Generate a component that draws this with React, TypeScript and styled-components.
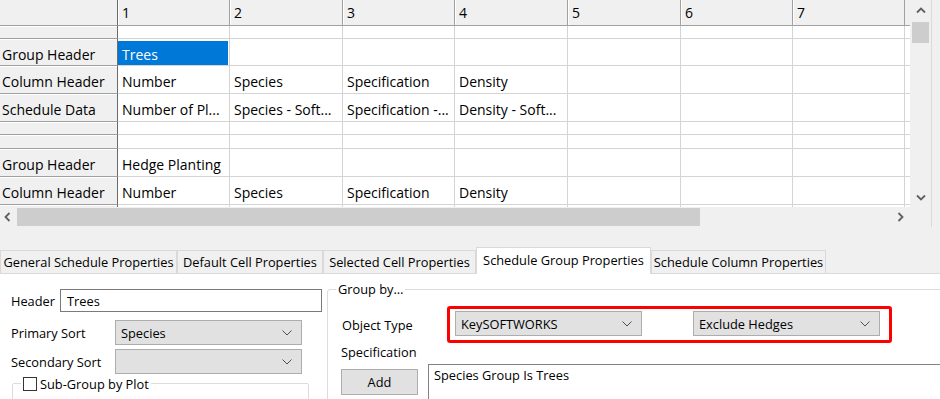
import React from 'react';
import styled, { createGlobalStyle } from 'styled-components';

const GlobalStyle = createGlobalStyle`
  html, body { margin: 0; padding: 0; background: #f0f0f0; }
  body { font-family: "Open Sans", "Noto Sans", sans-serif; color: #000; }
  * { box-sizing: border-box; }
`;

const COLS = [112, 113, 112, 113, 113, 112, 112];
const TEMPLATE = `118px ${COLS.map((w) => `${w}px`).join(' ')} 1fr`;

type RowData = { h: number; label?: string; cells?: string[]; selected?: number };

const ROWS: RowData[] = [
  { h: 13 },
  { h: 27, label: 'Group Header', cells: ['Trees'], selected: 0 },
  { h: 28, label: 'Column Header', cells: ['Number', 'Species', 'Specification', 'Density'] },
  { h: 28, label: 'Schedule Data', cells: ['Number of Pl...', 'Species - Soft...', 'Specification -...', 'Density - Soft...'] },
  { h: 13 },
  { h: 14 },
  { h: 28, label: 'Group Header', cells: ['Hedge Planting'] },
  { h: 28, label: 'Column Header', cells: ['Number', 'Species', 'Specification', 'Density'] },
  { h: 28 },
];

const TABS = [
  { label: 'General Schedule Properties', width: 177 },
  { label: 'Default Cell Properties', width: 146 },
  { label: 'Selected Cell Properties', width: 153 },
  { label: 'Schedule Group Properties', width: 175, active: true },
  { label: 'Schedule Column Properties', width: 175 },
];

const Window = styled.div`
  width: 940px;
  height: 399px;
  overflow: hidden;
  background: #f0f0f0;
  display: flex;
  flex-direction: column;
`;

const GridFrame = styled.div`
  width: 932px;
  height: 227px;
  flex: none;
  display: grid;
  grid-template-columns: 910px 21px;
  grid-template-rows: 207px 20px;
  border-right: 1px solid #dadada;
`;

const Sheet = styled.div`
  grid-column: 1;
  grid-row: 1;
  overflow: hidden;
  background: #fff;
  display: flex;
  flex-direction: column;
`;

const GridRow = styled.div<{ $h: number }>`
  display: grid;
  grid-template-columns: ${TEMPLATE};
  height: ${(p) => p.$h}px;
  flex: none;
`;

const CellBase = styled.div`
  display: flex;
  align-items: center;
  white-space: nowrap;
  overflow: hidden;
  font-size: 14px;
  line-height: 1;
`;

const Corner = styled(CellBase)`
  background: #f0f0f0;
  border-right: 1px solid #6b6b6b;
  border-bottom: 1px solid #a0a0a0;
`;

const ColHead = styled(CellBase)`
  background: #f0f0f0;
  border-right: 1px solid #a0a0a0;
  border-bottom: 1px solid #a0a0a0;
  box-shadow: inset 1px 0 0 #fff;
  padding-left: 4px;
`;

const HeadFiller = styled(CellBase)`
  background: #f0f0f0;
  border-bottom: 1px solid #a0a0a0;
`;

const RowHead = styled(CellBase)`
  background: #f0f0f0;
  border-right: 1px solid #6b6b6b;
  border-bottom: 1px solid #a0a0a0;
  box-shadow: inset 0 1px 0 #fff;
  padding: 5px 0 0 2px;
`;

const Cell = styled(CellBase)<{ $selected?: boolean }>`
  background: ${(p) => (p.$selected ? '#0078d7' : '#fff')};
  color: ${(p) => (p.$selected ? '#fff' : '#000')};
  box-shadow: ${(p) => (p.$selected ? 'inset 0 2px 0 #fff, inset -1px 0 0 #fff' : 'none')};
  border-right: 1px solid #d4d4d4;
  border-bottom: 1px solid #d4d4d4;
  padding: 5px 0 0 4px;
`;

const FillerCell = styled(CellBase)`
  background: #fff;
  border-bottom: 1px solid #d4d4d4;
`;

const VScroll = styled.div`
  grid-column: 2;
  grid-row: 1;
  background: #f0f0f0;
  display: flex;
  flex-direction: column;
  align-items: center;
`;

const HScroll = styled.div`
  grid-column: 1;
  grid-row: 2;
  background: #f0f0f0;
  display: flex;
  align-items: center;
`;

const ScrollCorner = styled.div`
  grid-column: 2;
  grid-row: 2;
  background: #f0f0f0;
`;

const ArrowBox = styled.div<{ $w: number; $h: number }>`
  width: ${(p) => p.$w}px;
  height: ${(p) => p.$h}px;
  flex: none;
  display: flex;
  align-items: center;
  justify-content: center;
`;

const VThumb = styled.div`
  width: 17px;
  height: 21px;
  margin-top: 2px;
  background: #cdcdcd;
  flex: none;
`;

const HThumb = styled.div<{ $w: number }>`
  width: ${(p) => p.$w}px;
  height: 18px;
  margin-left: 3px;
  background: #cdcdcd;
  flex: none;
`;

const Spacer = styled.div`
  flex: 1;
`;

const TabBar = styled.div`
  margin-top: 20px;
  height: 27px;
  flex: none;
  display: flex;
  align-items: flex-end;
  border-bottom: 1px solid #d9d9d9;
`;

const Tab = styled.div<{ $w: number; $active?: boolean }>`
  width: ${(p) => p.$w}px;
  height: ${(p) => (p.$active ? 27 : 23)}px;
  margin-bottom: ${(p) => (p.$active ? -1 : 0)}px;
  background: ${(p) => (p.$active ? '#fff' : '#f0f0f0')};
  border: 1px solid #d9d9d9;
  border-bottom: none;
  display: flex;
  align-items: center;
  justify-content: center;
  padding-bottom: ${(p) => (p.$active ? 3 : 1)}px;
  font-size: 12.8px;
  white-space: nowrap;
  flex: none;
`;

const Panel = styled.div`
  flex: 1;
  background: #fff;
  display: flex;
  align-items: flex-start;
  font-size: 12.8px;
  overflow: hidden;
`;

const LeftColumn = styled.div`
  width: 322px;
  flex: none;
  padding: 15px 0 0 11px;
  display: flex;
  flex-direction: column;
`;

const HeaderRow = styled.div`
  display: flex;
  align-items: center;
  gap: 5px;
`;

const Label = styled.span`
  white-space: nowrap;
`;

const TextBox = styled.div<{ $w: number }>`
  width: ${(p) => p.$w}px;
  height: 23px;
  border: 1px solid #7a7a7a;
  background: #fff;
  padding-left: 6px;
  display: flex;
  align-items: center;
`;

const SortGrid = styled.div`
  margin-top: 8px;
  display: grid;
  grid-template-columns: 104px 187px;
  row-gap: 4px;
  align-items: center;
`;

const Combo = styled.div<{ $w?: number }>`
  width: ${(p) => (p.$w ? `${p.$w}px` : 'auto')};
  height: 25px;
  background: #e1e1e1;
  border: 1px solid #adadad;
  display: flex;
  align-items: center;
  justify-content: space-between;
  padding: 0 9px 0 5px;
  white-space: nowrap;
`;

const SubGroup = styled.fieldset`
  margin: 1px 0 0 1px;
  width: 297px;
  height: 40px;
  border: 1px solid #dcdcdc;
  border-radius: 2px;
  padding: 0 8px;
`;

const Legend = styled.legend`
  padding: 0 2px 0 2px;
  display: flex;
  align-items: center;
  gap: 3px;
  height: 17px;
`;

const CheckBox = styled.span`
  width: 14px;
  height: 14px;
  border: 1px solid #333;
  background: #fff;
  display: inline-block;
`;

const GroupBox = styled.fieldset`
  margin: 7px 0 0 5px;
  width: 640px;
  height: 140px;
  flex: none;
  border: 1px solid #dcdcdc;
  border-radius: 3px;
  padding: 8px 0 0 14px;
`;

const GroupLegend = styled.legend`
  padding: 0 2px;
  margin-left: -6px;
  height: 17px;
  line-height: 17px;
`;

const ObjectRow = styled.div`
  display: flex;
  align-items: center;
`;

const ObjectLabel = styled(Label)`
  width: 105px;
  flex: none;
`;

const Highlight = styled.div`
  display: flex;
  gap: 51px;
  border: 3px solid #ff0000;
  border-radius: 3px;
  padding: 2px 9px 4px 5px;
`;

const SpecRow = styled.div`
  display: flex;
  align-items: flex-start;
  margin-top: 1px;
`;

const SpecColumn = styled.div`
  display: flex;
  flex-direction: column;
  gap: 8px;
  margin-left: -1px;
`;

const SpecLabel = styled(Label)`
  height: 17px;
  line-height: 17px;
`;

const Button = styled.div`
  width: 77px;
  height: 26px;
  background: #e1e1e1;
  border: 1px solid #adadad;
  display: flex;
  align-items: center;
  justify-content: center;
`;

const TextArea = styled.div`
  margin: 20px 0 0 10px;
  width: 560px;
  height: 50px;
  border: 1px solid #828282;
  background: #fff;
  padding: 1px 5px;
`;

const ComboChevron = () => (
  <svg width="10" height="6" viewBox="0 0 10 6">
    <path d="M0.5 0.5 L5 5 L9.5 0.5" stroke="#505050" strokeWidth="1" fill="none" />
  </svg>
);

const ScrollArrow = ({ dir }: { dir: 'up' | 'down' | 'left' | 'right' }) => {
  const paths: Record<string, string> = {
    up: 'M1 5.5 L5 1.5 L9 5.5',
    down: 'M1 1.5 L5 5.5 L9 1.5',
    left: 'M5.5 1 L1.5 5 L5.5 9',
    right: 'M1.5 1 L5.5 5 L1.5 9',
  };
  const vertical = dir === 'up' || dir === 'down';
  return (
    <svg width={vertical ? 10 : 7} height={vertical ? 7 : 10} viewBox={vertical ? '0 0 10 7' : '0 0 7 10'}>
      <path d={paths[dir]} stroke="#606060" strokeWidth="1.8" fill="none" />
    </svg>
  );
};

export default function App() {
  return (
    <>
      <GlobalStyle />
      <Window>
        <GridFrame>
          <Sheet>
            <GridRow $h={26}>
              <Corner />
              {COLS.map((_, i) => (
                <ColHead key={i}>{i + 1}</ColHead>
              ))}
              <HeadFiller />
            </GridRow>
            {ROWS.map((row, r) => (
              <GridRow key={r} $h={row.h}>
                <RowHead>{row.label ?? ''}</RowHead>
                {COLS.map((_, c) => (
                  <Cell key={c} $selected={row.selected === c}>
                    {row.cells?.[c] ?? ''}
                  </Cell>
                ))}
                <FillerCell />
              </GridRow>
            ))}
          </Sheet>
          <VScroll>
            <ArrowBox $w={21} $h={20}>
              <ScrollArrow dir="up" />
            </ArrowBox>
            <VThumb />
            <Spacer />
            <ArrowBox $w={21} $h={20}>
              <ScrollArrow dir="down" />
            </ArrowBox>
          </VScroll>
          <HScroll>
            <ArrowBox $w={14} $h={20}>
              <ScrollArrow dir="left" />
            </ArrowBox>
            <HThumb $w={683} />
            <Spacer />
            <ArrowBox $w={20} $h={20}>
              <ScrollArrow dir="right" />
            </ArrowBox>
          </HScroll>
          <ScrollCorner />
        </GridFrame>

        <TabBar>
          {TABS.map((t) => (
            <Tab key={t.label} $w={t.width} $active={t.active}>
              {t.label}
            </Tab>
          ))}
        </TabBar>

        <Panel>
          <LeftColumn>
            <HeaderRow>
              <Label>Header</Label>
              <TextBox $w={262}>Trees</TextBox>
            </HeaderRow>
            <SortGrid>
              <Label>Primary Sort</Label>
              <Combo>
                <span>Species</span>
                <ComboChevron />
              </Combo>
              <Label>Secondary Sort</Label>
              <Combo>
                <span />
                <ComboChevron />
              </Combo>
            </SortGrid>
            <SubGroup>
              <Legend>
                <CheckBox />
                <span>Sub-Group by Plot</span>
              </Legend>
            </SubGroup>
          </LeftColumn>

          <GroupBox>
            <GroupLegend>Group by…</GroupLegend>
            <ObjectRow>
              <ObjectLabel>Object Type</ObjectLabel>
              <Highlight>
                <Combo $w={187}>
                  <span>KeySOFTWORKS</span>
                  <ComboChevron />
                </Combo>
                <Combo $w={187}>
                  <span>Exclude Hedges</span>
                  <ComboChevron />
                </Combo>
              </Highlight>
            </ObjectRow>
            <SpecRow>
              <SpecColumn>
                <SpecLabel>Specification</SpecLabel>
                <Button>Add</Button>
              </SpecColumn>
              <TextArea>Species Group Is Trees</TextArea>
            </SpecRow>
          </GroupBox>
        </Panel>
      </Window>
    </>
  );
}
